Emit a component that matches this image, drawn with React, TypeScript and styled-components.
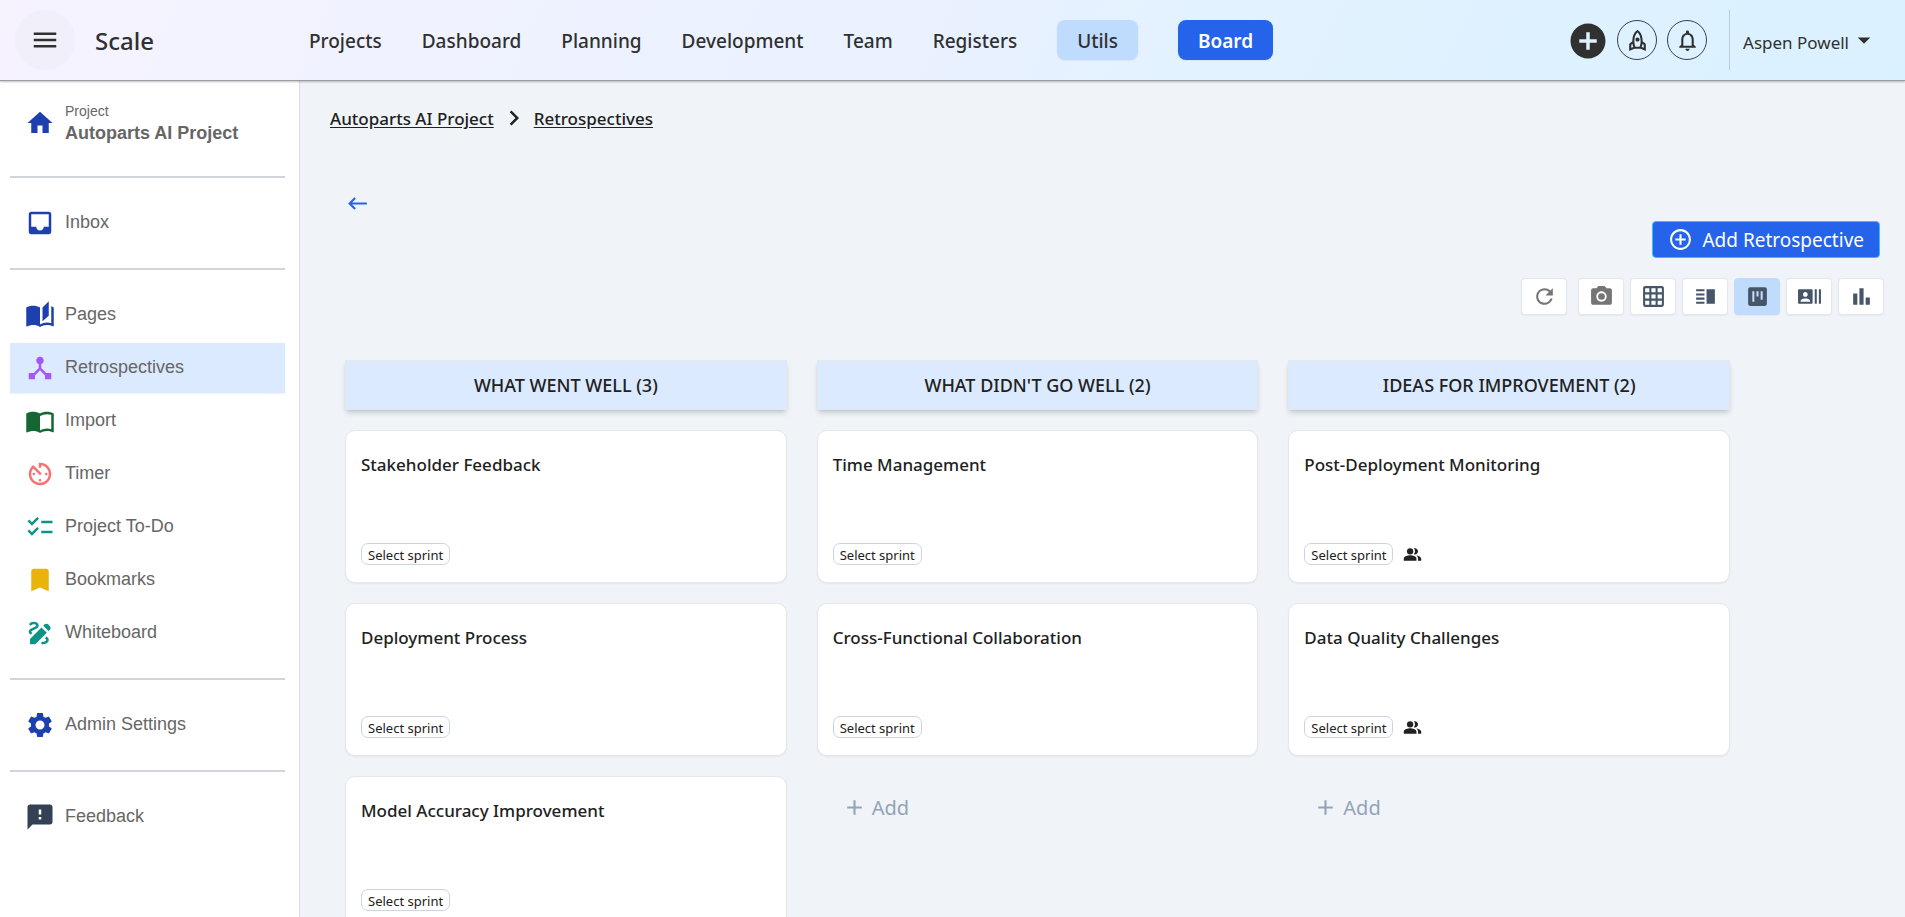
import React from "react";
import styled, { createGlobalStyle } from "styled-components";
import type { IconType } from "react-icons";
import {
  MdAdd,
  MdAddCircle,
  MdAddCircleOutline,
  MdArrowDropDown,
  MdAutoStories,
  MdAvTimer,
  MdBarChart,
  MdBookmark,
  MdCameraAlt,
  MdChecklist,
  MdChevronRight,
  MdDeviceHub,
  MdDraw,
  MdFeedback,
  MdGridOn,
  MdHome,
  MdImportContacts,
  MdInbox,
  MdKeyboardBackspace,
  MdMenu,
  MdNotificationsNone,
  MdOutlineRocket,
  MdPeopleAlt,
  MdRecentActors,
  MdRefresh,
  MdSettings,
  MdVerticalSplit,
  MdViewKanban,
} from "react-icons/md";

const GlobalStyle = createGlobalStyle`
  *, *::before, *::after { box-sizing: border-box; }
  body {
    margin: 0;
    background: #f0f4f9;
    color: #212121;
    font-family: "Noto Sans", "Open Sans", sans-serif;
  }
  button {
    margin: 0;
    padding: 0;
    border: 0;
    background: none;
    color: inherit;
    font: inherit;
    cursor: pointer;
  }
  a { color: inherit; text-decoration: none; }
  svg { display: block; flex: none; }
`;

const Shell = styled.div`
  display: flex;
  flex-direction: column;
  height: 100vh;
`;

const Header = styled.header`
  position: relative;
  z-index: 1;
  flex: none;
  display: flex;
  align-items: center;
  height: 81px;
  padding: 0 26px 0 15px;
  border-bottom: 1px solid #999ca3;
  background: linear-gradient(115deg, #f6f3ff, #e9f1ff 50%, #e3f2ff 62%, #daf1ff);
  box-shadow: 0 1px 2px rgba(0, 0, 0, 0.25);
  color: #303030;
`;

const MenuButton = styled.button`
  display: grid;
  place-items: center;
  flex: none;
  width: 60px;
  height: 60px;
  border-radius: 50%;
  background: #f1eff9;
`;

const Brand = styled.span`
  flex: none;
  width: 234px;
  padding-left: 20px;
  font-size: 24px;
  font-weight: 500;
`;

const MainNav = styled.nav`
  flex: 1;
  display: flex;
  align-items: center;
  gap: 40px;
  font-size: 19px;
  font-weight: 500;
  line-height: 42px;

  a { height: 40px; }
`;

const NavPill = styled.a<{ $solid?: boolean }>`
  padding: 0 20px;
  border-radius: 8px;
  background: ${(p) => (p.$solid ? "#2563eb" : "#bfdbfe")};
  color: ${(p) => (p.$solid ? "#fff" : "inherit")};
  font-weight: ${(p) => (p.$solid ? 600 : 500)};
  box-shadow: 0 1px 2px rgba(0, 0, 0, 0.06);
`;

const HeaderActions = styled.div`
  display: flex;
  align-items: center;
  gap: 10px;
`;

const RoundButton = styled.button<{ $outlined?: boolean }>`
  display: grid;
  place-items: center;
  width: 40px;
  height: 40px;
  border: ${(p) => (p.$outlined ? "1px solid #334155" : "0")};
  border-radius: 50%;
`;

const UserMenu = styled.button`
  display: flex;
  align-items: center;
  height: 60px;
  margin-left: 12px;
  padding-left: 13px;
  border-left: 1px solid #bccbd9;
  font-size: 17px;
`;

const UserName = styled.span`
  padding-top: 4px;
`;

const Body = styled.div`
  flex: 1;
  display: flex;
  min-height: 0;
`;

const Sidebar = styled.aside`
  flex: none;
  width: 300px;
  padding: 15px 14px 0 10px;
  border-right: 1px solid #d9dce0;
  background: #fff;
  color: #666;
  font-family: "Liberation Sans", Arial, sans-serif;
  font-size: 18px;
`;

const ProjectLink = styled.a`
  display: flex;
  align-items: center;
  gap: 10px;
  height: 54px;
  margin-bottom: 26px;
  padding: 0 15px;
  line-height: 22px;
`;

const ProjectCaption = styled.span`
  display: block;
  font-size: 14px;
`;

const SideLabel = styled.span`
  padding-bottom: 2px;
`;

const Divider = styled.hr`
  height: 2px;
  margin: 20px 0;
  border: 0;
  background: #d1d5db;
`;

const SideList = styled.ul`
  display: flex;
  flex-direction: column;
  gap: 3px;
  margin: 0;
  padding: 0;
  list-style: none;
`;

const SideLink = styled.a<{ $active?: boolean }>`
  display: flex;
  align-items: center;
  gap: 10px;
  height: 50px;
  padding: 0 15px;
  background: ${(p) => (p.$active ? "#dbeafe" : "transparent")};
  box-shadow: ${(p) => (p.$active ? "0 1px 2px rgba(0, 0, 0, 0.06)" : "none")};
`;

const Main = styled.main`
  flex: 1;
  min-width: 0;
  overflow: auto;
  scrollbar-width: none;
  padding: 22px 21px 30px 30px;
`;

const Breadcrumbs = styled.nav`
  display: flex;
  align-items: center;
  gap: 5px;
  height: 30px;
  font-size: 17px;
  font-weight: 500;

  a { text-decoration: underline; text-underline-offset: 2px; }
`;

const BackButton = styled.button`
  display: block;
  margin: 58px 0 5px 15px;
  color: #2563eb;
`;

const Actions = styled.div`
  display: flex;
  justify-content: flex-end;
  padding-right: 4px;
`;

const AddRetroButton = styled.button`
  display: flex;
  align-items: center;
  gap: 9px;
  height: 37px;
  padding: 0 15px;
  border: 1px solid #38bdf8;
  border-radius: 4px;
  background: #2563eb;
  color: #fff;
  font-size: 19px;
`;

const Toolbar = styled.div`
  display: flex;
  justify-content: flex-end;
  gap: 6px;
  margin: 20px 0 45px;
`;

const ToolButton = styled.button<{ $active?: boolean; $muted?: boolean }>`
  display: grid;
  place-items: center;
  width: 46px;
  height: 37px;
  border: 1px solid ${(p) => (p.$active ? "#bfdbfe" : "#e2e8f0")};
  border-radius: 4px;
  background: ${(p) => (p.$active ? "#bfdbfe" : "#fff")};
  color: ${(p) => (p.$muted ? "#757575" : "#475569")};
  box-shadow: 0 1px 2px rgba(0, 0, 0, 0.05);

  &:first-child { margin-right: 5px; }
`;

const Board = styled.div`
  display: grid;
  grid-template-columns: repeat(3, 1fr);
  gap: 30px;
  padding: 0 154px 0 15px;
`;

const Column = styled.section`
  display: flex;
  flex-direction: column;
  gap: 20px;
`;

const ColumnTitle = styled.h2`
  height: 50px;
  margin: 0;
  border: 1px solid #e2e8f0;
  background: #dbeafe;
  box-shadow: 0 4px 6px -1px rgba(0, 0, 0, 0.14), 0 2px 4px -2px rgba(0, 0, 0, 0.14);
  font-size: 18px;
  font-weight: 500;
  line-height: 48px;
  text-align: center;
  text-transform: uppercase;
`;

const Card = styled.article`
  display: flex;
  flex-direction: column;
  justify-content: space-between;
  height: 153px;
  padding: 20px 15px 17px;
  border: 1px solid #e5e7eb;
  border-radius: 10px;
  background: #fff;
  box-shadow: 0 1px 2px rgba(0, 0, 0, 0.06);
`;

const CardTitle = styled.h3`
  margin: 0;
  font-size: 17px;
  font-weight: 500;
  line-height: 28px;
`;

const CardFooter = styled.div`
  display: flex;
  align-items: center;
  gap: 10px;
`;

const SprintButton = styled.button`
  height: 22px;
  padding: 0 6px;
  border: 1px solid #cbd5e1;
  border-radius: 7px;
  font-size: 13px;
  line-height: 22px;
`;

const AddCardButton = styled.button`
  display: flex;
  align-items: center;
  gap: 5px;
  align-self: flex-start;
  height: 30px;
  margin: 16px 0 0 25px;
  color: #94a3b8;
  font-size: 20px;
`;

type SideItem = { label: string; icon: IconType; color: string; active?: boolean };

const sideGroups: SideItem[][] = [
  [{ label: "Inbox", icon: MdInbox, color: "#1e40af" }],
  [
    { label: "Pages", icon: MdAutoStories, color: "#1e40af" },
    { label: "Retrospectives", icon: MdDeviceHub, color: "#a855f7", active: true },
    { label: "Import", icon: MdImportContacts, color: "#166534" },
    { label: "Timer", icon: MdAvTimer, color: "#f87171" },
    { label: "Project To-Do", icon: MdChecklist, color: "#0d9488" },
    { label: "Bookmarks", icon: MdBookmark, color: "#eab308" },
    { label: "Whiteboard", icon: MdDraw, color: "#0d9488" },
  ],
  [{ label: "Admin Settings", icon: MdSettings, color: "#1e40af" }],
  [{ label: "Feedback", icon: MdFeedback, color: "#334155" }],
];

const navItems = ["Projects", "Dashboard", "Planning", "Development", "Team", "Registers"];

const tools: { label: string; icon: IconType; active?: boolean; muted?: boolean }[] = [
  { label: "Refresh", icon: MdRefresh, muted: true },
  { label: "Take snapshot", icon: MdCameraAlt, muted: true },
  { label: "Grid view", icon: MdGridOn },
  { label: "Split view", icon: MdVerticalSplit },
  { label: "Board view", icon: MdViewKanban, active: true },
  { label: "Members view", icon: MdRecentActors },
  { label: "Charts", icon: MdBarChart },
];

const columns: { title: string; cards: { title: string; shared?: boolean }[] }[] = [
  {
    title: "What went well",
    cards: [
      { title: "Stakeholder Feedback" },
      { title: "Deployment Process" },
      { title: "Model Accuracy Improvement" },
    ],
  },
  {
    title: "What didn't go well",
    cards: [{ title: "Time Management" }, { title: "Cross-Functional Collaboration" }],
  },
  {
    title: "Ideas for improvement",
    cards: [
      { title: "Post-Deployment Monitoring", shared: true },
      { title: "Data Quality Challenges", shared: true },
    ],
  },
];

export default function App() {
  return (
    <>
      <GlobalStyle />
      <Shell>
        <Header>
          <MenuButton aria-label="Toggle menu">
            <MdMenu size={30} />
          </MenuButton>
          <Brand>Scale</Brand>
          <MainNav aria-label="Main">
            {navItems.map((item) => (
              <a href="#" key={item}>{item}</a>
            ))}
            <NavPill href="#">Utils</NavPill>
            <NavPill href="#" $solid>Board</NavPill>
          </MainNav>
          <HeaderActions>
            <RoundButton aria-label="Create">
              <MdAddCircle size={42} />
            </RoundButton>
            <RoundButton $outlined aria-label="What's new">
              <MdOutlineRocket size={25} />
            </RoundButton>
            <RoundButton $outlined aria-label="Notifications">
              <MdNotificationsNone size={25} />
            </RoundButton>
            <UserMenu>
              <UserName>Aspen Powell</UserName>
              <MdArrowDropDown size={30} />
            </UserMenu>
          </HeaderActions>
        </Header>
        <Body>
          <Sidebar>
            <ProjectLink href="#">
              <MdHome size={30} color="#1e40af" />
              <SideLabel>
                <ProjectCaption>Project</ProjectCaption>
                <strong>Autoparts AI Project</strong>
              </SideLabel>
            </ProjectLink>
            {sideGroups.map((group) => (
              <React.Fragment key={group[0].label}>
                <Divider />
                <SideList>
                  {group.map(({ label, icon: Icon, color, active }) => (
                    <li key={label}>
                      <SideLink href="#" $active={active}>
                        <Icon size={30} color={color} />
                        <SideLabel>{label}</SideLabel>
                      </SideLink>
                    </li>
                  ))}
                </SideList>
              </React.Fragment>
            ))}
          </Sidebar>
          <Main>
            <Breadcrumbs aria-label="Breadcrumb">
              <a href="#">Autoparts AI Project</a>
              <MdChevronRight size={30} />
              <a href="#">Retrospectives</a>
            </Breadcrumbs>
            <BackButton aria-label="Back">
              <MdKeyboardBackspace size={25} />
            </BackButton>
            <Actions>
              <AddRetroButton>
                <MdAddCircleOutline size={25} />
                Add Retrospective
              </AddRetroButton>
            </Actions>
            <Toolbar>
              {tools.map(({ label, icon: Icon, active, muted }) => (
                <ToolButton key={label} aria-label={label} $active={active} $muted={muted}>
                  <Icon size={25} />
                </ToolButton>
              ))}
            </Toolbar>
            <Board>
              {columns.map((column) => (
                <Column key={column.title}>
                  <ColumnTitle>{`${column.title} (${column.cards.length})`}</ColumnTitle>
                  {column.cards.map((card) => (
                    <Card key={card.title}>
                      <CardTitle>{card.title}</CardTitle>
                      <CardFooter>
                        <SprintButton>Select sprint</SprintButton>
                        {card.shared && <MdPeopleAlt size={19} aria-label="Shared" />}
                      </CardFooter>
                    </Card>
                  ))}
                  <AddCardButton>
                    <MdAdd size={25} />
                    Add
                  </AddCardButton>
                </Column>
              ))}
            </Board>
          </Main>
        </Body>
      </Shell>
    </>
  );
}
